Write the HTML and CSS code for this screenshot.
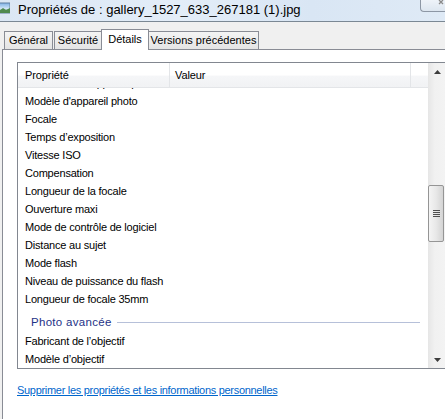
FILE: index.html
```html
<!DOCTYPE html>
<html lang="fr">
<head>
<meta charset="utf-8">
<title>Propriétés</title>
<link rel="stylesheet" href="styles.css">
</head>
<body>
<div class="window">
  <div class="titlebar">
    <div class="title-left">
      <svg class="app-icon" width="11" height="12" viewBox="0 0 11 12">
        <defs>
          <linearGradient id="sky" x1="0" y1="0" x2="0" y2="1">
            <stop offset="0" stop-color="#7fb2e6"/>
            <stop offset="0.55" stop-color="#cfe4f6"/>
            <stop offset="1" stop-color="#6aa06a"/>
          </linearGradient>
        </defs>
        <rect x="0" y="1" width="11" height="10" fill="url(#sky)" stroke="#5f7f9f" stroke-width="1"/>
        <path d="M0 9 L4 6 L7 8 L11 6 L11 11 L0 11 Z" fill="#4f8a4f"/>
      </svg>
      <span class="title-text">Propriétés de : gallery_1527_633_267181 (1).jpg</span>
    </div>
    <div class="close-btn">
      <svg width="8" height="7" viewBox="0 0 8 7"><path d="M1 0 L5 4 M5 0 L1 4" stroke="#8a8a8a" stroke-width="1.3" fill="none"/></svg>
    </div>
  </div>

  <div class="tabstrip">
    <div class="tab t-gen">Général</div>
    <div class="tab t-sec">Sécurité</div>
    <div class="tab active">Détails</div>
    <div class="tab t-ver">Versions précédentes</div>
  </div>

  <div class="panel">
    <div class="listview">
      <div class="list-main">
        <div class="lv-header">
          <div class="col col-name">Propriété</div>
          <div class="col col-value">Valeur</div>
          <div class="col col-rest"></div>
        </div>
        <div class="lv-body">
          <div class="row clip"><span>Fabricant de l'appareil photo</span></div>
          <div class="row">Modèle d'appareil photo</div>
          <div class="row">Focale</div>
          <div class="row">Temps d’exposition</div>
          <div class="row">Vitesse ISO</div>
          <div class="row">Compensation</div>
          <div class="row">Longueur de la focale</div>
          <div class="row">Ouverture maxi</div>
          <div class="row">Mode de contrôle de logiciel</div>
          <div class="row">Distance au sujet</div>
          <div class="row">Mode flash</div>
          <div class="row">Niveau de puissance du flash</div>
          <div class="row">Longueur de focale 35mm</div>
          <div class="group"><span class="group-label">Photo avancée</span><span class="group-line"></span></div>
          <div class="row">Fabricant de l’objectif</div>
          <div class="row">Modèle d’objectif</div>
        </div>
      </div>
      <div class="scrollbar">
        <div class="sb-btn"><svg width="7" height="4" viewBox="0 0 7 4"><path d="M3.5 0 L7 4 L0 4 Z" fill="#3c3c3c"/></svg></div>
        <div class="sb-track">
          <div class="sb-thumb">
            <svg width="7" height="7" viewBox="0 0 7 7"><path d="M0 0.5 H7 M0 2.5 H7 M0 4.5 H7 M0 6.5 H7" stroke="#505050" stroke-width="1"/></svg>
          </div>
        </div>
        <div class="sb-btn"><svg width="7" height="4" viewBox="0 0 7 4"><path d="M0 0 L7 0 L3.5 4 Z" fill="#3c3c3c"/></svg></div>
      </div>
    </div>
    <a class="remove-link" href="#">Supprimer les propriétés et les informations personnelles</a>
  </div>
</div>
</body>
</html>
```
FILE: styles.css
```css
* { box-sizing: border-box; }
html, body {
  margin: 0;
  padding: 0;
  width: 445px;
  height: 419px;
  overflow: hidden;
  background: #f0f0f0;
}
body {
  font-family: "Liberation Sans", Arial, sans-serif;
  font-size: 11px;
  color: #000;
}
.window {
  display: flex;
  flex-direction: column;
  height: 419px;
}
.titlebar {
  height: 22px;
  flex: none;
  display: flex;
  justify-content: space-between;
  align-items: flex-start;
  background: linear-gradient(90deg, #dbe7f4 0%, #e3edf8 40%, #d9e6f4 70%, #dfeaf6 100%);
  border-bottom: 1px solid #7b8894;
}
.title-left {
  display: flex;
  align-items: center;
  height: 21px;
}
.app-icon { margin-left: -1px; margin-top: -5px; }
.title-text {
  margin-left: 8px;
  font-size: 13px;
  color: #000;
  margin-top: -3px;
}
.close-btn {
  width: 25px;
  height: 12px;
  border-left: 1px solid #8d97a5;
  border-bottom: 1px solid #8d97a5;
  border-bottom-left-radius: 4px;
  background: linear-gradient(#eef3f9, #dde6f0);
  display: flex;
  justify-content: flex-end;
}
.close-btn svg { margin-right: -1px; }

.tabstrip {
  height: 27px;
  flex: none;
  display: flex;
  align-items: flex-end;
  padding-left: 4px;
}
.tab {
  height: 18px;
  line-height: 17px;
  border: 1px solid #898c95;
  border-bottom: none;
  background: linear-gradient(#f4f4f4, #e4e4e4);
  font-size: 11px;
  white-space: nowrap;
  text-align: center;
  overflow: hidden;
}
.t-gen { width: 49px; margin-right: 1px; }
.t-sec { width: 48px; margin-right: -1px; }
.tab.active {
  height: 21px;
  width: 48px;
  background: #fff;
  margin-bottom: -1px;
  line-height: 19px;
  z-index: 1;
  position: relative;
}
.t-ver { width: 111px; margin-left: -1px; }

.panel {
  flex: 1;
  margin-left: 2px;
  background: #fff;
  border-left: 1px solid #898c95;
  border-top: 1px solid #898c95;
  padding: 12px 0 0 14px;
  display: flex;
  flex-direction: column;
  align-items: flex-start;
}
.listview {
  width: 429px;
  height: 307px;
  border: 1px solid #828790;
  display: flex;
  background: #fff;
  flex: none;
}
.list-main {
  width: 410px;
  display: flex;
  flex-direction: column;
}
.lv-header {
  height: 25px;
  display: flex;
  border-bottom: 1px solid #e3e5e8;
  background: linear-gradient(#ffffff 0%, #ffffff 50%, #f5f6f8 55%, #f1f2f4 100%);
  width: 427px;
  margin-right: -17px;
}
.col {
  height: 24px;
  line-height: 24px;
  border-right: 1px solid #e3e5e8;
  font-size: 11px;
  letter-spacing: -0.1px;
  white-space: nowrap;
}
.col-name { width: 152px; padding-left: 7px; }
.col-value { width: 241px; padding-left: 5px; }
.col-rest { width: 17px; border-right: none; }

.lv-body {
  flex: 1;
  overflow: hidden;
}
.row {
  height: 18px;
  line-height: 18px;
  padding-left: 7px;
  font-size: 11px;
  letter-spacing: -0.2px;
  white-space: nowrap;
}
.row.clip {
  height: 4px;
  overflow: hidden;
}
.row.clip span {
  display: block;
  margin-top: -14px;
}
.group {
  height: 24px;
  display: flex;
  align-items: center;
  padding-top: 4px;
  padding-left: 13px;
}
.group-label {
  color: #1e3287;
  font-size: 11.5px;
  white-space: nowrap;
  letter-spacing: 0.3px;
}
.group-line {
  height: 1px;
  background: #b6c0d9;
  width: 303px;
  margin-left: 5px;
}
.scrollbar {
  width: 17px;
  flex: none;
  display: flex;
  flex-direction: column;
  background: linear-gradient(90deg, #e6e6e6, #f1f1f1 40%, #f3f3f3);
}
.sb-btn {
  height: 17px;
  display: flex;
  align-items: center;
  justify-content: center;
  padding-left: 1px;
}
.sb-track {
  flex: 1;
  padding-top: 105px;
}
.sb-thumb {
  width: 16px;
  height: 57px;
  border: 1px solid #959595;
  border-radius: 2px;
  background: linear-gradient(90deg, #f4f4f4, #e8e8e8 50%, #d4d4d4);
  display: flex;
  align-items: center;
  justify-content: center;
}
.remove-link {
  margin-top: 14px;
  color: #0066cc;
  font-size: 11px;
  letter-spacing: -0.3px;
  line-height: 15px;
  text-decoration: underline;
}
```
